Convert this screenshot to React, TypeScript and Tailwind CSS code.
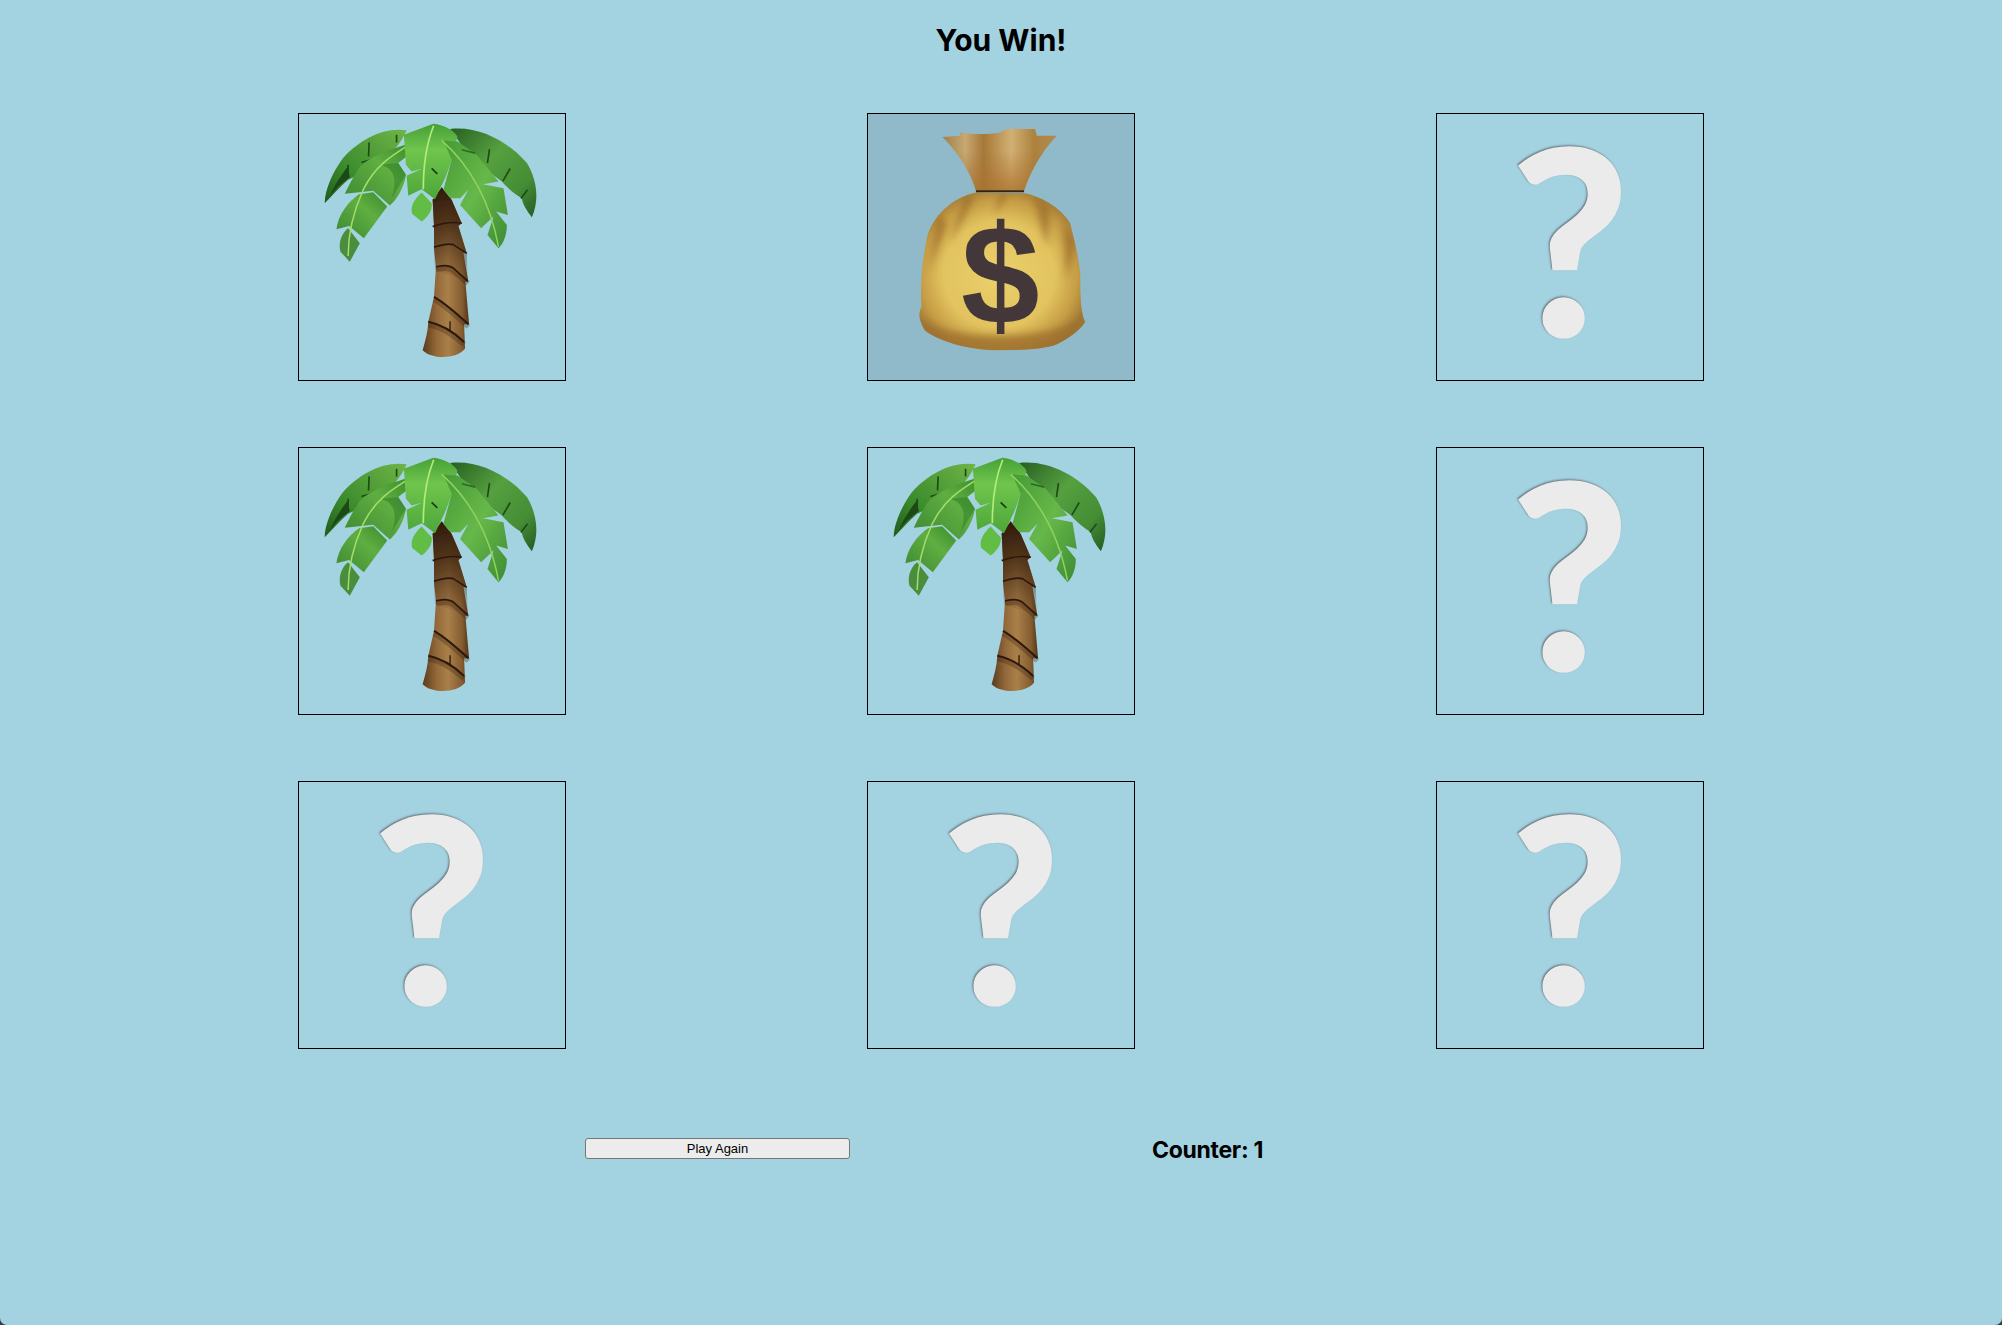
const sans = "font-['Inter',sans-serif]";

type Card = 'palm' | 'bag' | 'hidden';

const CARDS: Card[] = ['palm', 'bag', 'hidden', 'palm', 'palm', 'hidden', 'hidden', 'hidden', 'hidden'];

const BAG_BODY =
  'M378 278 C320 290 255 335 232 410 C220 470 210 540 215 620 C206 640 205 655 225 690 C270 725 360 750 450 750 C520 750 590 745 620 732 C655 715 690 690 705 665 C692 640 690 590 690 520 C685 470 672 420 660 370 C630 320 570 290 525 280 Z';
const BAG_NECK =
  'M278 112 L330 108 L330 98 C370 104 420 104 450 98 L470 88 L555 88 L560 108 L620 108 C590 140 550 190 522 272 L378 272 C360 210 320 155 278 112 Z';

// viewBox is in 3x px so the paths could be read straight off a zoomed crop
function PalmIcon({ id }: { id: string }) {
  return (
    <svg viewBox="58 43 796 796" className="h-[266px] w-[266px]">
      <defs>
        <linearGradient id={`${id}-trunk`} x1="0" y1="0" x2="1" y2="0">
          <stop offset="0" stopColor="#5a3a1c" />
          <stop offset="0.3" stopColor="#94693a" />
          <stop offset="0.55" stopColor="#a98049" />
          <stop offset="0.85" stopColor="#845c30" />
          <stop offset="1" stopColor="#52341a" />
        </linearGradient>
        <linearGradient id={`${id}-shade`} x1="0" y1="0" x2="0" y2="1">
          <stop offset="0" stopColor="#2e1a0c" stopOpacity="1" />
          <stop offset="0.4" stopColor="#3f2511" stopOpacity="0.8" />
          <stop offset="1" stopColor="#3f2511" stopOpacity="0" />
        </linearGradient>
        <linearGradient id={`${id}-backL`} x1="0" y1="1" x2="1" y2="0">
          <stop offset="0" stopColor="#1f5a1d" />
          <stop offset="0.35" stopColor="#3a8a2b" />
          <stop offset="1" stopColor="#6fb547" />
        </linearGradient>
        <linearGradient id={`${id}-backR`} x1="0" y1="0" x2="1" y2="1">
          <stop offset="0" stopColor="#275f22" />
          <stop offset="0.4" stopColor="#55a03f" />
          <stop offset="0.75" stopColor="#458d35" />
          <stop offset="1" stopColor="#235a23" />
        </linearGradient>
        <linearGradient id={`${id}-left`} x1="1" y1="0" x2="0" y2="1">
          <stop offset="0" stopColor="#3a8a2c" />
          <stop offset="0.4" stopColor="#5fae41" />
          <stop offset="1" stopColor="#3c8733" />
        </linearGradient>
        <linearGradient id={`${id}-centre`} x1="0" y1="0" x2="0" y2="1">
          <stop offset="0" stopColor="#46a035" />
          <stop offset="0.35" stopColor="#70c54d" />
          <stop offset="1" stopColor="#4ca639" />
        </linearGradient>
        <linearGradient id={`${id}-right`} x1="0" y1="0" x2="1" y2="1">
          <stop offset="0" stopColor="#459a35" />
          <stop offset="0.5" stopColor="#67b849" />
          <stop offset="1" stopColor="#3c8a33" />
        </linearGradient>
        <filter id={`${id}-soft`} x="-5%" y="-5%" width="110%" height="110%">
          <feGaussianBlur stdDeviation="2" />
        </filter>
      </defs>
      <g filter={`url(#${id}-soft)`}>
        {/* trunk */}
        <path d="M485 262 L515 300 L545 370 L535 378 L560 460 L550 458 L565 545 L556 545 L567 672 L552 672 L555 745 C530 778 455 778 428 750 C436 720 444 695 445 665 L462 590 L468 500 L462 445 L462 380 L458 300 Z" fill={`url(#${id}-trunk)`} />
        <path d="M485 262 L515 300 L545 370 L535 378 L560 460 L563 545 L465 510 L462 445 L462 380 L458 300 Z" fill={`url(#${id}-shade)`} />
        <g stroke="#3a2210" strokeWidth="16" fill="none" opacity="0.3">
          <path d="M462 598 C490 614 530 648 565 680" />
          <path d="M445 673 C480 680 520 703 552 733" />
          <path d="M468 508 C490 504 505 502 520 512 L563 551" />
        </g>
        <path d="M458 380 C480 372 515 364 545 370" stroke="#2d190b" strokeWidth="5" fill="none" />
        <path d="M462 442 C480 436 500 428 520 434 L560 460" stroke="#2d190b" strokeWidth="5" fill="none" />
        <path d="M468 500 C490 496 505 494 520 504 L563 543" stroke="#2d190b" strokeWidth="5" fill="none" />
        <path d="M462 590 C490 606 530 640 565 672" stroke="#2d190b" strokeWidth="6" fill="none" />
        <path d="M445 665 C480 672 520 695 552 725" stroke="#2d190b" strokeWidth="6" fill="none" />
        <path d="M510 663 L510 692" stroke="#2d190b" strokeWidth="4" fill="none" />
        <path d="M458 300 C470 300 490 298 512 296" stroke="#3a200e" strokeWidth="4" fill="none" />
        {/* back fronds */}
        <path d="M510 88 C590 78 680 120 740 190 C770 240 778 300 755 352 C738 330 726 310 725 295 C700 280 680 262 665 245 C640 225 600 200 570 180 C550 150 530 110 510 88 Z" fill={`url(#${id}-backR)`} />
        <path d="M380 92 C310 82 240 120 190 175 C160 215 135 270 135 310 C160 285 180 262 205 240 L290 200 C330 170 365 130 380 92 Z" fill={`url(#${id}-backL)`} />
        <path d="M150 290 C170 262 190 248 210 232 L204 200 C180 232 160 262 150 290 Z" fill="#1c4a17" />
        <path d="M268 128 L266 170 M350 105 L350 128 M245 188 C265 180 285 178 305 182 M205 195 L205 222 M628 148 L622 190 M690 206 L668 244 M742 270 L722 296" stroke="#1f4c17" strokeWidth="5" fill="none" />
        {/* left front frond */}
        <path d="M395 130 C340 145 265 170 235 208 C218 235 205 260 195 282 L280 273 L330 317 C350 300 372 265 378 225 L355 190 L380 170 Z" fill={`url(#${id}-left)`} />
        <path d="M238 283 C205 305 175 345 170 388 L208 378 L252 415 L322 320 L280 277 Z" fill={`url(#${id}-left)`} />
        <path d="M205 385 C185 400 175 430 182 455 L210 485 L240 430 Z" fill="#4a8d3e" />
        <path d="M300 195 C330 200 360 225 335 295 L378 225 L355 190 Z" fill="#2f7f2a" opacity="0.55" />
        <path d="M420 115 C340 165 290 190 250 270 C225 325 205 385 205 468" stroke="#a2de68" strokeWidth="4.5" fill="none" />
        {/* centre frond */}
        <path d="M372 105 L460 72 C490 75 520 90 532 110 L518 175 L495 235 L465 298 L425 268 L385 288 L380 228 L425 207 L395 215 L378 195 Z" fill={`url(#${id}-centre)`} />
        <path d="M425 278 C400 300 390 325 397 342 L425 365 C445 350 458 330 455 310 Z" fill="#62bd45" />
        <path d="M461 78 C440 130 430 200 430 268" stroke="#b3ec7b" strokeWidth="5" fill="none" />
        <path d="M455 206 L472 222" stroke="#1c3d10" strokeWidth="5" fill="none" />
        {/* right front frond */}
        <path d="M490 122 L532 125 L590 165 L655 245 L608 253 L670 265 L683 345 L648 335 L680 375 C680 405 670 430 655 445 L622 405 L640 350 L603 385 L540 315 L565 270 L540 295 L512 295 L490 270 L515 180 Z" fill={`url(#${id}-right)`} />
        <path d="M485 122 C550 180 625 280 655 440" stroke="#8fd25f" strokeWidth="4.5" fill="none" />
        <path d="M545 150 L585 160" stroke="#2c6d24" strokeWidth="5" fill="none" />
      </g>
    </svg>
  );
}

function BagIcon({ id }: { id: string }) {
  return (
    <svg viewBox="55 43 796 796" className="h-[266px] w-[266px]">
      <defs>
        <linearGradient id={`${id}-neck`} x1="0" y1="0" x2="1" y2="0">
          <stop offset="0" stopColor="#a27f4d" />
          <stop offset="0.2" stopColor="#c7a873" />
          <stop offset="0.36" stopColor="#a67838" />
          <stop offset="0.6" stopColor="#d2b074" />
          <stop offset="0.8" stopColor="#ad823f" />
          <stop offset="1" stopColor="#b08b52" />
        </linearGradient>
        <linearGradient id={`${id}-neckDown`} x1="0" y1="0" x2="0" y2="1">
          <stop offset="0.35" stopColor="#a9702c" stopOpacity="0" />
          <stop offset="1" stopColor="#a9702c" stopOpacity="0.75" />
        </linearGradient>
        <radialGradient id={`${id}-body`} cx="0.48" cy="0.52" r="0.56">
          <stop offset="0" stopColor="#ead06b" />
          <stop offset="0.6" stopColor="#e2c35f" />
          <stop offset="0.85" stopColor="#c59c44" />
          <stop offset="1" stopColor="#9f7a37" />
        </radialGradient>
        <clipPath id={`${id}-clip`}>
          <path d={BAG_BODY} />
        </clipPath>
        <filter id={`${id}-edge`} x="-5%" y="-5%" width="110%" height="110%">
          <feGaussianBlur stdDeviation="1.6" />
        </filter>
        <filter id={`${id}-fold`} x="-80%" y="-30%" width="260%" height="160%">
          <feGaussianBlur stdDeviation="11" />
        </filter>
      </defs>
      <g filter={`url(#${id}-edge)`}>
        <path d={BAG_NECK} fill={`url(#${id}-neck)`} />
        <path d={BAG_NECK} fill={`url(#${id}-neckDown)`} />
        <path d={BAG_BODY} fill={`url(#${id}-body)`} />
      </g>
      <g clipPath={`url(#${id}-clip)`}>
        <g filter={`url(#${id}-fold)`} fill="#9d6f2d" opacity="0.8">
          <path d="M345 285 L300 430 L375 290 Z" />
          <path d="M450 280 L435 345 L475 280 Z" />
          <path d="M550 285 L590 440 L600 320 Z" />
          <path d="M262 340 L240 510 L290 370 Z" />
          <path d="M640 370 L650 540 L680 420 Z" />
          <path d="M215 655 C300 725 600 725 700 650 L700 770 L215 770 Z" />
        </g>
      </g>
      <path d="M378 274 L522 274" stroke="#33240f" strokeWidth="6" />
      {/* dollar sign on the sack */}
      <text x="451" y="671" textAnchor="middle" className="font-['Liberation_Sans',sans-serif] text-[423px] font-bold" fill="#43373a">$</text>
    </svg>
  );
}

function HiddenIcon() {
  return (
    <span className="mb-[22px] font-['Lato',sans-serif] text-[260px] leading-none font-black text-[#ebebeb] [text-shadow:-1px_-1px_2px_#6a757b]">?</span>
  );
}

function Tile({ card, index }: { card: Card; index: number }) {
  return (
    <div className={`flex h-[268px] w-[268px] items-center justify-center border border-black ${card === 'bag' ? 'bg-[#90b9c9]' : ''}`}>
      {card === 'palm' && <PalmIcon id={`palm${index}`} />}
      {card === 'bag' && <BagIcon id={`bag${index}`} />}
      {card === 'hidden' && <HiddenIcon />}
    </div>
  );
}

export default function App() {
  return (
    <div className="h-[1325px] w-full bg-[#3c3a3e]">
      <div className={`flex h-full w-full flex-col items-center rounded-b-[7px] bg-[#a3d2e1] text-black ${sans}`}>
        <h1 className="mt-[22px] text-[30px] leading-[36px] font-bold">You Win!</h1>
        <div className="mt-[55px] grid grid-cols-[repeat(3,268px)] gap-x-[301px] gap-y-[66px]">
          {CARDS.map((c, i) => (
            <Tile key={i} card={c} index={i} />
          ))}
        </div>
        <div className="mt-[84px] flex w-full items-center pl-[585px]">
          <button className="h-[21px] w-[265px] rounded-[3px] border border-[#767676] bg-[#ececec] font-['Liberation_Sans',sans-serif] text-[13px] leading-none">
            Play Again
          </button>
          <span className="mt-[3px] ml-[302px] text-[23px] leading-[28px] font-bold tracking-[-0.3px]">Counter: 1</span>
        </div>
      </div>
    </div>
  );
}
